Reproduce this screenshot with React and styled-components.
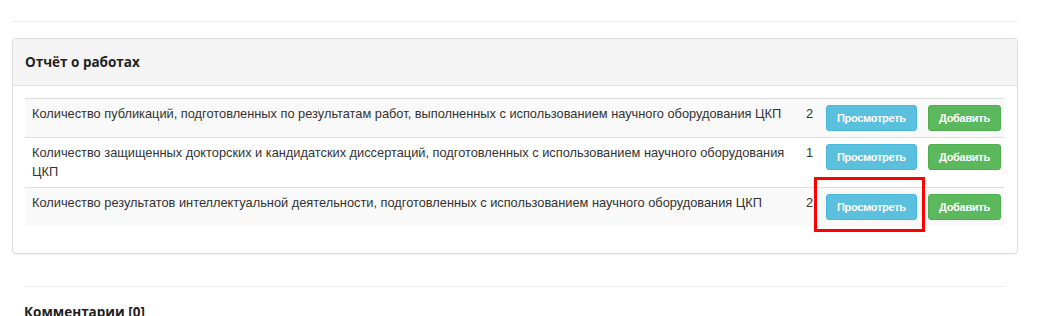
import styled, { createGlobalStyle } from 'styled-components';

const GlobalStyle = createGlobalStyle`
	body {
		margin: 0;
		background: #fff;
		font-family: "Liberation Sans", Arial, sans-serif;
		color: #333;
	}
`;

const Page = styled.div`
	width: 1006px;
	padding: 21px 0 0 12px;
`;

const Rule = styled.hr`
	margin: 0;
	border: 0;
	border-top: 1px solid #eee;
`;

const Panel = styled.section`
	margin-top: 16px;
	border: 1px solid #ddd;
	border-radius: 4px;
	background: #fff;
	box-shadow: 0 1px 2px rgba(0, 0, 0, 0.06);
	overflow: hidden;
`;

const PanelHeading = styled.div`
	height: 46px;
	display: flex;
	align-items: center;
	padding: 0 12px;
	background: #f4f4f4;
	border-bottom: 1px solid #ddd;
`;

const Title = styled.h3`
	margin: 0;
	font-family: "Open Sans", "Noto Sans", sans-serif;
	font-weight: 700;
	font-size: 13.5px;
	color: #222;
`;

const PanelBody = styled.div`
	padding: 12px 12px 27px;
`;

const Table = styled.table`
	width: 979px;
	table-layout: fixed;
	border-collapse: collapse;
	font-size: 12.8px;
	line-height: 18.5px;
`;

const Col = styled.col`
	width: ${({ $width }) => $width};
`;

const Row = styled.tr`
	background: ${({ $striped }) => ($striped ? '#f9f9f9' : '#fff')};
	border-top: 1px solid #ddd;
`;

const Cell = styled.td`
	padding: 6px 6px 6px ${({ $padLeft }) => $padLeft || '6px'};
	vertical-align: top;
	position: relative;
	white-space: ${({ $nowrap }) => ($nowrap ? 'nowrap' : 'normal')};
`;

const Button = styled.button`
	display: block;
	height: 26px;
	padding: 0 10px;
	border: 1px solid ${({ $variant }) => ($variant === 'info' ? '#46b8da' : '#4cae4c')};
	border-radius: 3px;
	background: ${({ $variant }) => ($variant === 'info' ? '#5bc0de' : '#5cb85c')};
	color: #fff;
	font-family: "Liberation Sans", Arial, sans-serif;
	font-weight: 700;
	font-size: 11px;
	letter-spacing: -0.3px;
	cursor: pointer;
`;

const Highlight = styled.div`
	position: absolute;
	left: -6px;
	top: -11px;
	width: 105px;
	height: 49px;
	border: 3px solid #ff0000;
	pointer-events: none;
`;

const Comments = styled.div`
	margin: 32px 12px 0;
`;

const CommentsTitle = styled.h4`
	margin: 16px 0 0;
	font-family: "Open Sans", "Noto Sans", sans-serif;
	font-weight: 700;
	font-size: 13.5px;
	line-height: 18px;
	color: #222;
`;

const rows = [
	{
		text: 'Количество публикаций, подготовленных по результатам работ, выполненных с использованием научного оборудования ЦКП',
		count: 2,
	},
	{
		text: 'Количество защищенных докторских и кандидатских диссертаций, подготовленных с использованием научного оборудования ЦКП',
		count: 1,
	},
	{
		text: 'Количество результатов интеллектуальной деятельности, подготовленных с использованием научного оборудования ЦКП',
		count: 2,
		highlighted: true,
	},
];

export default function App() {
	return (
		<Page>
			<GlobalStyle />
			<Rule />
			<Panel>
				<PanelHeading>
					<Title>Отчёт о работах</Title>
				</PanelHeading>
				<PanelBody>
					<Table>
						<colgroup>
							<Col $width="775px" />
							<Col $width="20px" />
							<Col $width="102px" />
							<Col $width="82px" />
						</colgroup>
						<tbody>
							{rows.map(({ text, count, highlighted }, i) => (
								<Row key={i} $striped={i % 2 === 0}>
									<Cell $padLeft="7px">{text}</Cell>
									<Cell>{count}</Cell>
									<Cell $nowrap>
										<Button $variant="info">Просмотреть</Button>
										{highlighted && <Highlight />}
									</Cell>
									<Cell $nowrap>
										<Button $variant="success">Добавить</Button>
									</Cell>
								</Row>
							))}
						</tbody>
					</Table>
				</PanelBody>
			</Panel>
			<Comments>
				<Rule />
				<CommentsTitle>Комментарии [0]</CommentsTitle>
			</Comments>
		</Page>
	);
}
